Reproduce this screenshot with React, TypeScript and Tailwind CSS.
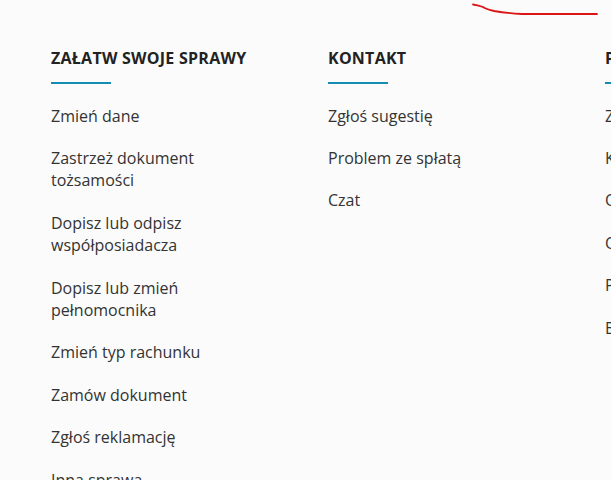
import React from "react";

type Column = { title: string; links: string[] };

const columns: Column[] = [
  {
    title: "ZAŁATW SWOJE SPRAWY",
    links: [
      "Zmień dane",
      "Zastrzeż dokument tożsamości",
      "Dopisz lub odpisz współposiadacza",
      "Dopisz lub zmień pełnomocnika",
      "Zmień typ rachunku",
      "Zamów dokument",
      "Zgłoś reklamację",
      "Inna sprawa",
    ],
  },
  {
    title: "KONTAKT",
    links: ["Zgłoś sugestię", "Problem ze spłatą", "Czat"],
  },
  {
    title: "PRODUKTY",
    links: ["Zakupy", "Kredyty", "Oszczędności", "Oferta", "Promocje", "Bezpieczeństwo"],
  },
];

export default function App() {
  return (
    <div
      className="relative w-[611px] h-[480px] overflow-hidden bg-[#fbfbfb]"
      style={{ fontFamily: '"Open Sans", "Noto Sans", sans-serif' }}
    >
      {/* pen stroke across the top */}
      <svg
        className="absolute left-0 top-0"
        width="611"
        height="30"
        viewBox="0 0 611 30"
        fill="none"
      >
        <path
          d="M473 4.5 C477 5 480 6 483 7 C486 9 489 10 494 11 C503 12.5 512 13.5 522 14 L597 14"
          stroke="#dc1414"
          strokeWidth="1.8"
          strokeLinecap="round"
        />
      </svg>

      <div className="flex pl-[51px] pt-[48px]">
        {columns.map((col) => (
          <div key={col.title} className="w-[277px] shrink-0 pr-[40px]">
            <h3 className="text-[16px] leading-[20px] font-bold text-[#222] whitespace-nowrap tracking-[0.25px]">
              {col.title}
            </h3>
            <div className="mt-[14px] h-[1.5px] w-[60px] bg-[#158db2]" />
            <ul className="mt-[21px] flex flex-col gap-[20px]">
              {col.links.map((l) => (
                <li
                  key={l}
                  className="text-[16px] leading-[22.4px] text-[#333] max-w-[170px]"
                >
                  {l}
                </li>
              ))}
            </ul>
          </div>
        ))}
      </div>
    </div>
  );
}
